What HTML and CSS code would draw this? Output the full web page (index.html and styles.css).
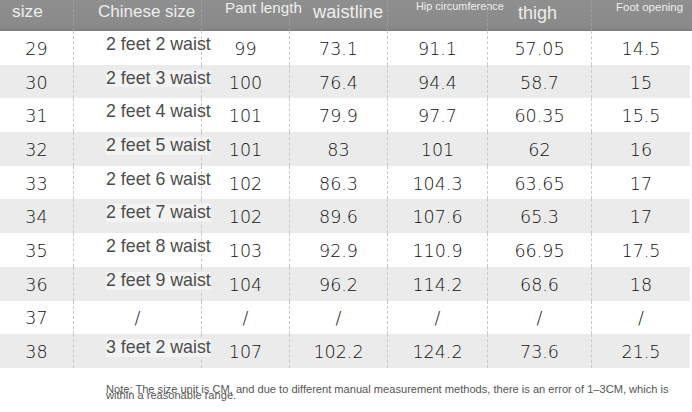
FILE: index.html
```html
<!DOCTYPE html>
<html>
<head>
<meta charset="utf-8">
<link rel="stylesheet" href="styles.css">
</head>
<body>
<div class="sheet">
  <div class="row head">
    <div class="hc c0"><span class="h-size">size</span></div>
    <div class="hc c1"><span class="h-cn">Chinese size</span></div>
    <div class="hc c2"><span class="h-pant">Pant length</span></div>
    <div class="hc c3"><span class="h-waist">waistline</span></div>
    <div class="hc c4"><span class="h-hip">Hip circumference</span></div>
    <div class="hc c5"><span class="h-thigh">thigh</span></div>
    <div class="hc c6"><span class="h-foot">Foot opening</span></div>
  </div>
  <div class="row"><div class="cell">29</div><div class="cell cn"><span>2 feet 2 waist</span></div><div class="cell">99</div><div class="cell">73.1</div><div class="cell">91.1</div><div class="cell">57.05</div><div class="cell">14.5</div></div>
  <div class="row alt"><div class="cell">30</div><div class="cell cn"><span>2 feet 3 waist</span></div><div class="cell">100</div><div class="cell">76.4</div><div class="cell">94.4</div><div class="cell">58.7</div><div class="cell">15</div></div>
  <div class="row"><div class="cell">31</div><div class="cell cn"><span>2 feet 4 waist</span></div><div class="cell">101</div><div class="cell">79.9</div><div class="cell">97.7</div><div class="cell">60.35</div><div class="cell">15.5</div></div>
  <div class="row alt"><div class="cell">32</div><div class="cell cn"><span>2 feet 5 waist</span></div><div class="cell">101</div><div class="cell">83</div><div class="cell">101</div><div class="cell">62</div><div class="cell">16</div></div>
  <div class="row"><div class="cell">33</div><div class="cell cn"><span>2 feet 6 waist</span></div><div class="cell">102</div><div class="cell">86.3</div><div class="cell">104.3</div><div class="cell">63.65</div><div class="cell">17</div></div>
  <div class="row alt"><div class="cell">34</div><div class="cell cn"><span>2 feet 7 waist</span></div><div class="cell">102</div><div class="cell">89.6</div><div class="cell">107.6</div><div class="cell">65.3</div><div class="cell">17</div></div>
  <div class="row"><div class="cell">35</div><div class="cell cn"><span>2 feet 8 waist</span></div><div class="cell">103</div><div class="cell">92.9</div><div class="cell">110.9</div><div class="cell">66.95</div><div class="cell">17.5</div></div>
  <div class="row alt"><div class="cell">36</div><div class="cell cn"><span>2 feet 9 waist</span></div><div class="cell">104</div><div class="cell">96.2</div><div class="cell">114.2</div><div class="cell">68.6</div><div class="cell">18</div></div>
  <div class="row"><div class="cell">37</div><div class="cell">/</div><div class="cell">/</div><div class="cell">/</div><div class="cell">/</div><div class="cell">/</div><div class="cell">/</div></div>
  <div class="row alt"><div class="cell">38</div><div class="cell cn"><span>3 feet 2 waist</span></div><div class="cell">107</div><div class="cell">102.2</div><div class="cell">124.2</div><div class="cell">73.6</div><div class="cell">21.5</div></div>
  <p class="note"><span class="l1">Note: The size unit is CM, and due to different manual measurement methods, there is an error of 1–3CM, which is</span><span class="l2">within a reasonable range.</span></p>
</div>
</body>
</html>
```
FILE: styles.css
```css
html, body {
  margin: 0;
  padding: 0;
  background: #ffffff;
}
.sheet {
  width: 692px;
  height: 412px;
  overflow: hidden;
}
.row {
  display: grid;
  grid-template-columns: 73px 128px 88px 98px 100px 104px 99px;
  width: 690px;
  height: 33.7px;
}
.row.alt {
  background: #ebebeb;
}
.row.head {
  height: 31px;
  width: 692px;
  grid-template-columns: 73px 128px 88px 98px 100px 104px 101px;
  background: linear-gradient(#8f8f8f, #8a8a8a 85%, #7e7e7e);
}
.hc {
  font-family: "Liberation Sans", Arial, sans-serif;
  color: #eeeeee;
  white-space: nowrap;
  position: relative;
}
.hc + .hc {
  border-left: 1px dashed #9c9c9c;
}
.hc span {
  position: absolute;
  line-height: 1;
}
.h-size { font-size: 17.4px; left: 12px; top: 3px; }
.h-cn { font-size: 17px; left: 24px; top: 3px; }
.h-pant { font-size: 15.2px; left: 23px; top: 0px; }
.h-waist { font-size: 18.3px; left: 23px; top: 3px; }
.h-hip { font-size: 10.9px; left: 28px; top: 1px; }
.h-thigh { font-size: 18px; left: 30px; top: 4px; }
.h-foot { font-size: 11.5px; left: 24px; top: 2px; }

.cell {
  display: flex;
  align-items: center;
  justify-content: center;
  font-family: "DejaVu Sans", sans-serif;
  font-weight: 200;
  font-size: 17.5px;
  color: #111111;
  padding-top: 2px;
  box-sizing: border-box;
}
.cell + .cell {
  border-left: 1px dashed #c9c9c9;
}
.cell.cn {
  justify-content: flex-start;
  align-items: flex-start;
  position: relative;
  z-index: 1;
  padding-top: 0;
}
.cell.cn span {
  font-family: "Liberation Sans", Arial, sans-serif;
  font-weight: normal;
  font-size: 17.8px;
  color: #4d4d4d;
  white-space: nowrap;
  margin-left: 32px;
  margin-top: 5px;
  line-height: 1;
}
.row.alt .cell.cn span {
  background: #f3f3f3;
}
.note {
  margin: 18px 0 0 106px;
  font-family: "Liberation Sans", Arial, sans-serif;
  font-size: 11.1px;
  color: #555555;
  white-space: nowrap;
  display: flex;
  flex-direction: column;
}
.note span {
  line-height: 6px;
  height: 6px;
}
```
